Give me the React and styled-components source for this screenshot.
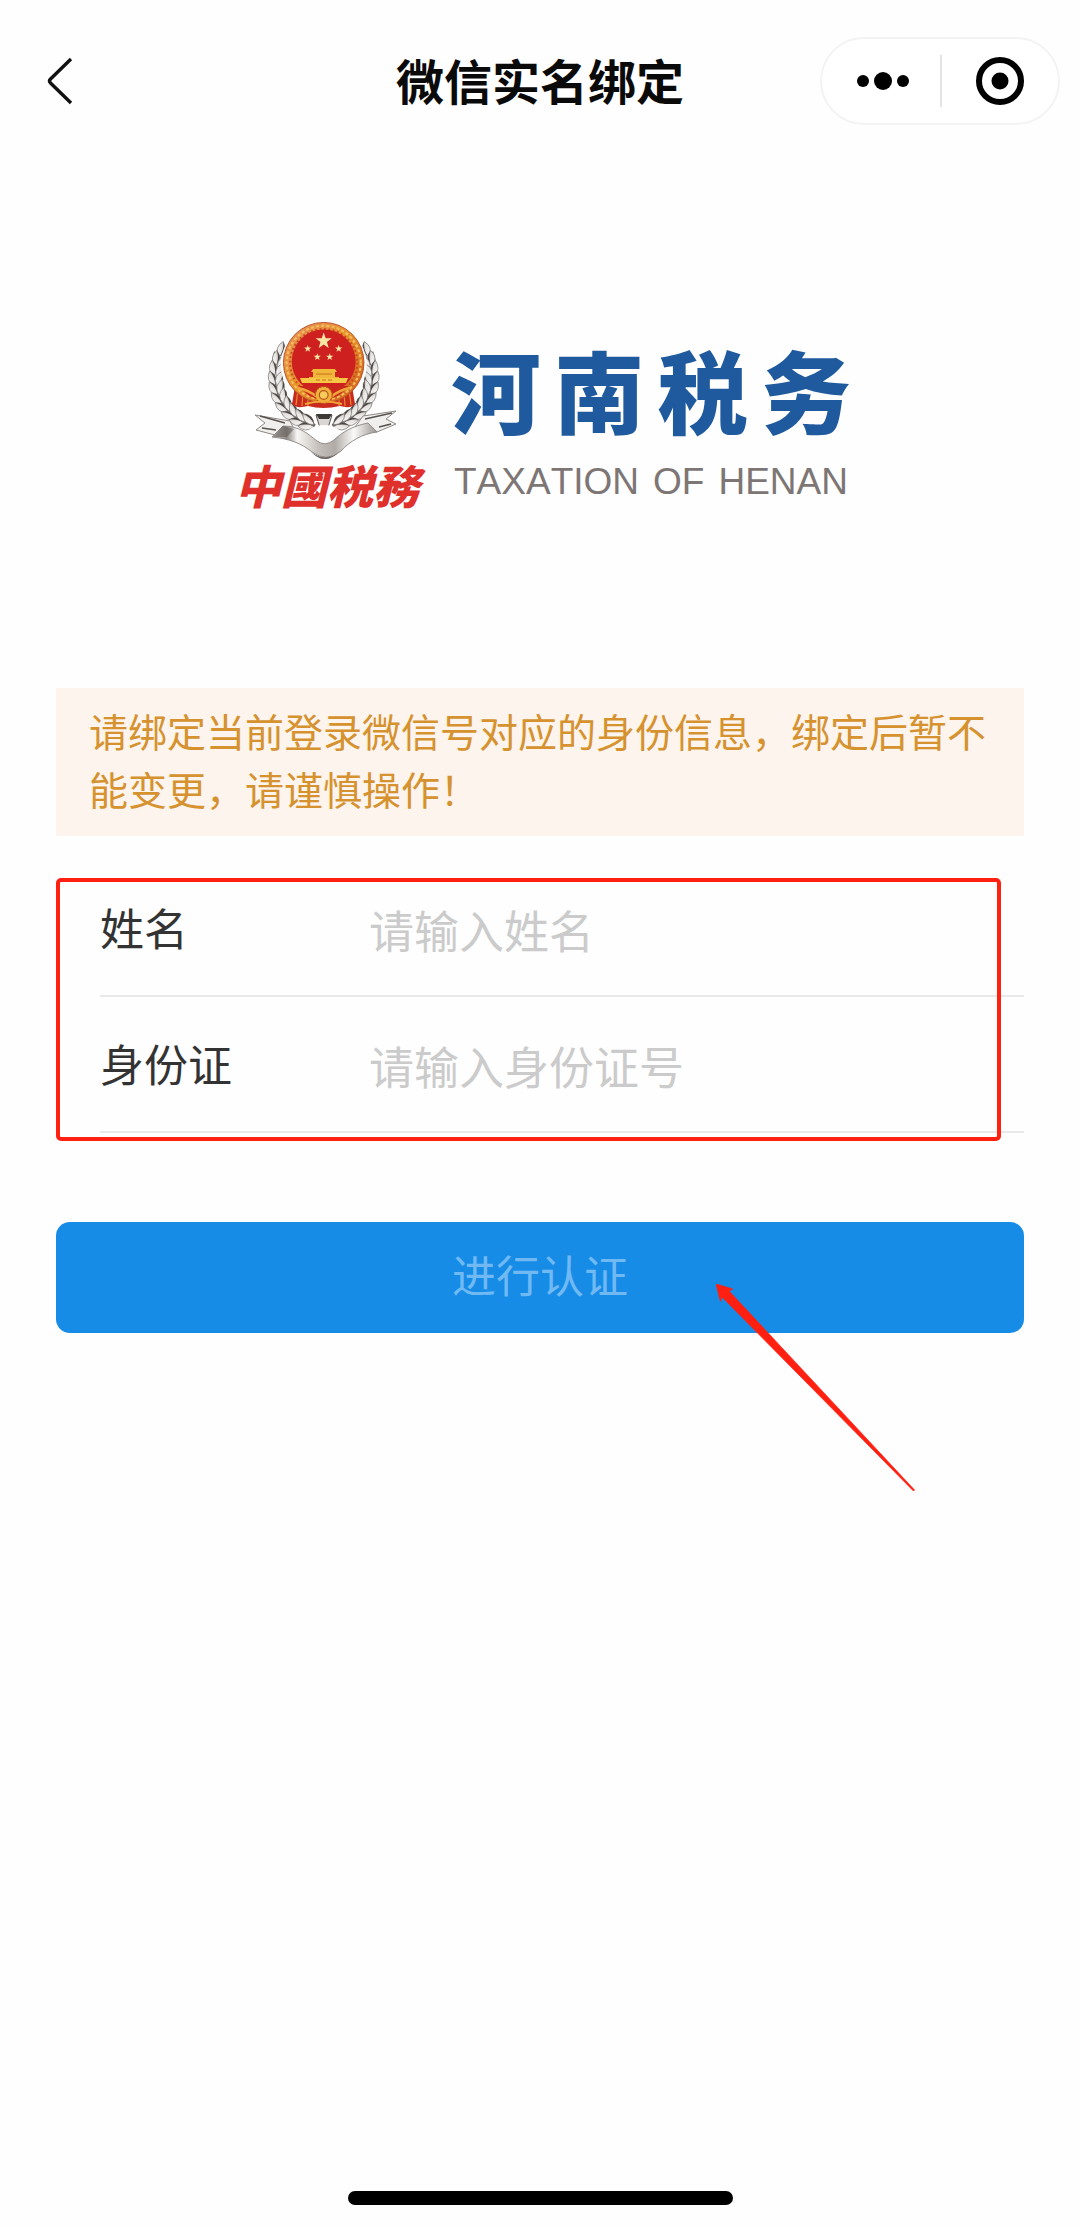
import React from "react";
import styled, { createGlobalStyle } from "styled-components";

const GlobalStyle = createGlobalStyle`
  * {
    box-sizing: border-box;
  }
  body {
    margin: 0;
    background: #fefefe;
    font-family: "Liberation Sans", "Noto Sans CJK SC", sans-serif;
  }
`;

const Page = styled.div`
  display: flex;
  flex-direction: column;
  min-height: 100vh;
  padding-bottom: 22px;
  font-family: "Noto Sans CJK SC", sans-serif;
`;

const NavBar = styled.header`
  display: grid;
  grid-template-columns: 1fr auto 1fr;
  align-items: center;
  height: 162px;
  padding: 0 20px 0 40px;
`;

const Title = styled.h1`
  margin: 0 20px 0 0;
  padding-bottom: 4px;
  font-size: 48px;
  line-height: 64px;
  font-weight: 700;
  color: #0a0a0a;
`;

const IconButton = styled.button`
  display: flex;
  align-items: center;
  justify-content: center;
  width: ${(p) => p.$width}px;
  height: 52px;
  padding: 0;
  border: 0;
  background: none;
  color: #000;
`;

const Capsule = styled.div`
  display: flex;
  align-items: center;
  justify-self: end;
  width: 240px;
  height: 88px;
  border: 2px solid #f3f3f3;
  border-radius: 44px;
  background: #fff;
`;

const CapsuleDivider = styled.span`
  width: 2px;
  height: 52px;
  background: #e4e4e4;
`;

const Main = styled.main`
  display: flex;
  flex-direction: column;
  padding: 0 56px;
`;

const Brand = styled.section`
  display: flex;
  justify-content: center;
  gap: 26px;
  padding: 156px 0 170px;
`;

const Badge = styled.div`
  display: flex;
  flex-direction: column;
  width: 196px;
`;

const BadgeName = styled.span`
  height: 62px;
  font-size: 46px;
  line-height: 56px;
  font-weight: 900;
  font-style: italic;
  text-align: center;
  white-space: nowrap;
  color: #e0302c;
`;

const Wordmark = styled.div`
  display: flex;
  flex-direction: column;
  gap: 24px;
  width: 400px;
  padding-top: 20px;
  text-align-last: justify;
`;

const BureauName = styled.span`
  font-size: 90px;
  line-height: 100px;
  font-weight: 900;
  color: #1f5a9e;
`;

const BureauLatin = styled.span`
  padding: 0 3px;
  font-family: "Liberation Sans", Arial, sans-serif;
  font-size: 37px;
  line-height: 40px;
  font-kerning: none;
  white-space: nowrap;
  color: #7d7675;
`;

const Notice = styled.p`
  margin: 0;
  padding: 13px 33px 19px;
  background: #fdf4ed;
  font-size: 39px;
  line-height: 58px;
  color: #d5922f;
`;

const Form = styled.form`
  display: flex;
  flex-direction: column;
  padding-top: 25px;
`;

const Fields = styled.div`
  position: relative;
  padding-left: 44px;
`;

const Field = styled.div`
  display: flex;
  align-items: center;
  height: 136px;
  border-bottom: 2px solid #e9e9e9;
`;

const Label = styled.label`
  flex: none;
  width: 269px;
  padding-bottom: 2px;
  font-size: 44px;
  line-height: 60px;
  color: #333;
`;

const TextInput = styled.input`
  flex: 1;
  min-width: 0;
  padding: 4px 0 0;
  border: 0;
  outline: 0;
  background: none;
  font-family: inherit;
  font-size: 45px;
  line-height: 60px;
  color: #333;
  &::placeholder {
    color: #cbcbcb;
    opacity: 1;
  }
`;

const Highlight = styled.div`
  position: absolute;
  top: 17px;
  left: 0;
  right: 23px;
  bottom: -8px;
  border: 4px solid #ff2012;
  border-radius: 5px;
  pointer-events: none;
`;

const SubmitArea = styled.div`
  position: relative;
  display: flex;
  margin-top: 89px;
`;

const Submit = styled.button`
  flex: 1;
  height: 111px;
  padding: 0 0 8px;
  border: 0;
  border-radius: 14px;
  background: #168ce7;
  font-family: inherit;
  font-size: 44px;
  line-height: 60px;
  color: #70b9f3;
`;

const Pointer = styled.svg`
  position: absolute;
  top: 62px;
  right: 108px;
  width: 200px;
  height: 208px;
  pointer-events: none;
`;

const HomeIndicator = styled.div`
  align-self: center;
  width: 385px;
  height: 14px;
  margin-top: auto;
  border-radius: 7px;
  background: #000;
`;

const starPoints = (cx, cy, r) =>
  Array.from({ length: 10 }, (_, i) => {
    const a = (Math.PI / 5) * i - Math.PI / 2;
    const d = i % 2 ? r * 0.4 : r;
    return `${(cx + d * Math.cos(a)).toFixed(2)},${(cy + d * Math.sin(a)).toFixed(2)}`;
  }).join(" ");

const stars = [
  [94.7, 23, 8.5],
  [78.7, 30.7, 3.8],
  [109.7, 30.7, 3.8],
  [88.3, 39, 3.8],
  [100.7, 39, 3.8],
];

function WheatBranch() {
  const grains = Array.from({ length: 10 }, (_, i) => 214 - i * 11.5);
  return (
    <g>
      <path d="M47 34Q38 62 54 86Q66 101 86 108" fill="none" stroke="#6a6562" strokeWidth="4" />
      {grains.map((deg) => {
        const a = (deg * Math.PI) / 180;
        return [51.5, 44].map((r, k) => {
          const x = 94.7 + r * Math.cos(a);
          const y = 60 + r * Math.sin(a);
          const turn = deg + 90 + (k ? 24 : -18);
          return (
            <g key={`${deg}-${r}`} transform={`translate(${x} ${y}) rotate(${turn})`}>
              <path d="M-8 0Q0 -7.500 8 0Q0 7 -8 0Z" fill="url(#grain)" stroke="#7d7875" strokeWidth="0.7" />
              <path d="M-7.500 0.600Q0 7 7.500 0.400Q0 3 -7.500 0.600Z" fill="#4b4745" />
            </g>
          );
        });
      })}
    </g>
  );
}

function Emblem() {
  return (
    <svg width="196" height="138" viewBox="0 0 196 138" overflow="visible" aria-hidden="true">
      <defs>
        <linearGradient id="grain" x1="0" y1="0" x2="1" y2="1">
          <stop offset="0" stopColor="#ffffff" />
          <stop offset="0.6" stopColor="#e4e1de" />
          <stop offset="1" stopColor="#8d8986" />
        </linearGradient>
        <linearGradient id="ribbon" x1="0" y1="0" x2="1" y2="0">
          <stop offset="0" stopColor="#d9d6d3" />
          <stop offset="0.14" stopColor="#8d8884" />
          <stop offset="0.24" stopColor="#f7f6f4" />
          <stop offset="0.45" stopColor="#c3beb9" />
          <stop offset="0.6" stopColor="#b0aba6" />
          <stop offset="0.78" stopColor="#fbfaf9" />
          <stop offset="1" stopColor="#9a9591" />
        </linearGradient>
        <linearGradient id="rim" x1="0" y1="0" x2="1" y2="1">
          <stop offset="0" stopColor="#e58c62" />
          <stop offset="0.45" stopColor="#e8952c" />
          <stop offset="1" stopColor="#cf5a1e" />
        </linearGradient>
      </defs>

      <WheatBranch />
      <g transform="translate(189.4 0) scale(-1 1)">
        <WheatBranch />
      </g>

      <path d="M26 97L61 103L66 113L46 117L27 112L36 105Z" fill="#f1efed" stroke="#8d8985" strokeWidth="1" />
      <path d="M167 93L134 98L126 109L148 114L167 106L157 101Z" fill="#f1efed" stroke="#8d8985" strokeWidth="1" />
      <path d="M31 98L56 105M33 110L47 112M136 101L163 95M150 109L162 106" stroke="#56524f" strokeWidth="1.3" fill="none" />
      <path d="M87 97H103L99 110H91Z" fill="#d9d6d3" stroke="#55514e" strokeWidth="1" />
      <path d="M87 96H103L100 101H90Z" fill="#3d3937" />
      <ellipse cx="95" cy="115" rx="16" ry="8" fill="#fff" />
      <path
        d="M54 108C71 108 79 116 88 123Q96 129 105 122C113 114 124 108 139 105L148 114C133 116 121 123 112 133Q98 145 83 134C72 125 61 121 43 119Z"
        fill="url(#ribbon)"
        stroke="#8a8581"
        strokeWidth="0.9"
      />
      <path d="M82 134Q97 145 112 133Q101 142 97 141Q90 142 82 134Z" fill="#6d6865" />
      <path d="M54 108L65 111L58 119L44 119Z" fill="#5e5956" opacity="0.55" />

      <circle cx="94.7" cy="47" r="43" fill="#fff" />
      <path d="M66 68L123 68L126 86Q122 91 111 88Q94 92 79 88Q67 91 63 86Z" fill="#c82a1e" />
      <path d="M69 71L67 87M74 74L73 88M79 78V88M110 78V88M115 74L116 88M120 71L122 87" stroke="#e88a35" strokeWidth="1.2" />
      <circle cx="94.7" cy="44.7" r="40.3" fill="url(#rim)" stroke="#b54a24" strokeWidth="0.9" />
      <circle cx="94.7" cy="44.7" r="37" fill="none" stroke="#f3bd5c" strokeWidth="2.2" strokeDasharray="3 2.2" />
      <circle cx="94.7" cy="44.7" r="33.6" fill="none" stroke="#c74a20" strokeWidth="2" strokeDasharray="1.8 2.6" />
      <circle cx="94.7" cy="43.4" r="32" fill="#cf2020" />
      {stars.map(([x, y, r]) => (
        <polygon key={x} points={starPoints(x, y, r)} fill="#fbe7a3" />
      ))}
      <path d="M84 51H106L108 54H82ZM84 54H106V59H84ZM80 59H110V62H80Z" fill="#f1b73a" />
      <path d="M71 60H119L117 65H73Z" fill="#f6c744" />
      <path d="M87 56H103M87 62H91M93 62H97M99 62H103" stroke="#c86d1d" strokeWidth="1" />
      <path d="M70 68H119Q112 80 94.7 82Q78 80 70 68Z" fill="#c9251d" />
      <path d="M68 70Q80 72 88 79M121 70Q110 72 102 79" stroke="#f0a638" strokeWidth="2.6" fill="none" />
      <circle cx="94.7" cy="77" r="8.4" fill="#f2b23b" stroke="#b7521b" strokeWidth="1.2" strokeDasharray="2 1.2" />
      <circle cx="94.7" cy="77" r="4.4" fill="#f6cb5c" stroke="#b7521b" strokeWidth="1.2" />
      <path d="M76 86Q94 81 113 86" stroke="#f0a638" strokeWidth="2" fill="none" />
    </svg>
  );
}

export default function App() {
  return (
    <>
      <GlobalStyle />
      <Page>
        <NavBar>
          <IconButton type="button" $width={40} aria-label="返回">
            <svg width="40" height="52" viewBox="0 0 40 52" fill="none" aria-hidden="true">
              <path d="M31 4L10.500 24Q8.500 26 10.500 28L31 48" stroke="#111" strokeWidth="3.400" />
            </svg>
          </IconButton>
          <Title>微信实名绑定</Title>
          <Capsule>
            <IconButton type="button" $width={118} aria-label="更多">
              <svg width="60" height="24" viewBox="0 0 60 24" fill="currentColor" aria-hidden="true">
                <circle cx="12" cy="12" r="6" />
                <circle cx="32" cy="12" r="9" />
                <circle cx="52" cy="12" r="6" />
              </svg>
            </IconButton>
            <CapsuleDivider />
            <IconButton type="button" $width={116} aria-label="关闭">
              <svg width="50" height="50" viewBox="0 0 50 50" aria-hidden="true">
                <circle cx="25" cy="25" r="21" fill="none" stroke="currentColor" strokeWidth="6" />
                <circle cx="25" cy="25" r="8.5" fill="currentColor" />
              </svg>
            </IconButton>
          </Capsule>
        </NavBar>

        <Main>
          <Brand>
            <Badge>
              <Emblem />
              <BadgeName>中國税務</BadgeName>
            </Badge>
            <Wordmark>
              <BureauName>河南税务</BureauName>
              <BureauLatin>TAXATION OF HENAN</BureauLatin>
            </Wordmark>
          </Brand>

          <Notice>请绑定当前登录微信号对应的身份信息，绑定后暂不能变更，请谨慎操作！</Notice>

          <Form onSubmit={(e) => e.preventDefault()}>
            <Fields>
              <Field>
                <Label htmlFor="name">姓名</Label>
                <TextInput id="name" type="text" placeholder="请输入姓名" />
              </Field>
              <Field>
                <Label htmlFor="id-number">身份证</Label>
                <TextInput id="id-number" type="text" placeholder="请输入身份证号" />
              </Field>
              <Highlight />
            </Fields>
            <SubmitArea>
              <Submit type="submit">进行认证</Submit>
              <Pointer viewBox="0 0 200 208" aria-hidden="true">
                <path d="M0 0L16.700 5L13 7L198.500 206L197.500 207L6 13L4.500 17.500Z" fill="#ff2012" stroke="#ff2012" strokeWidth="0.8" />
              </Pointer>
            </SubmitArea>
          </Form>
        </Main>

        <HomeIndicator />
      </Page>
    </>
  );
}
